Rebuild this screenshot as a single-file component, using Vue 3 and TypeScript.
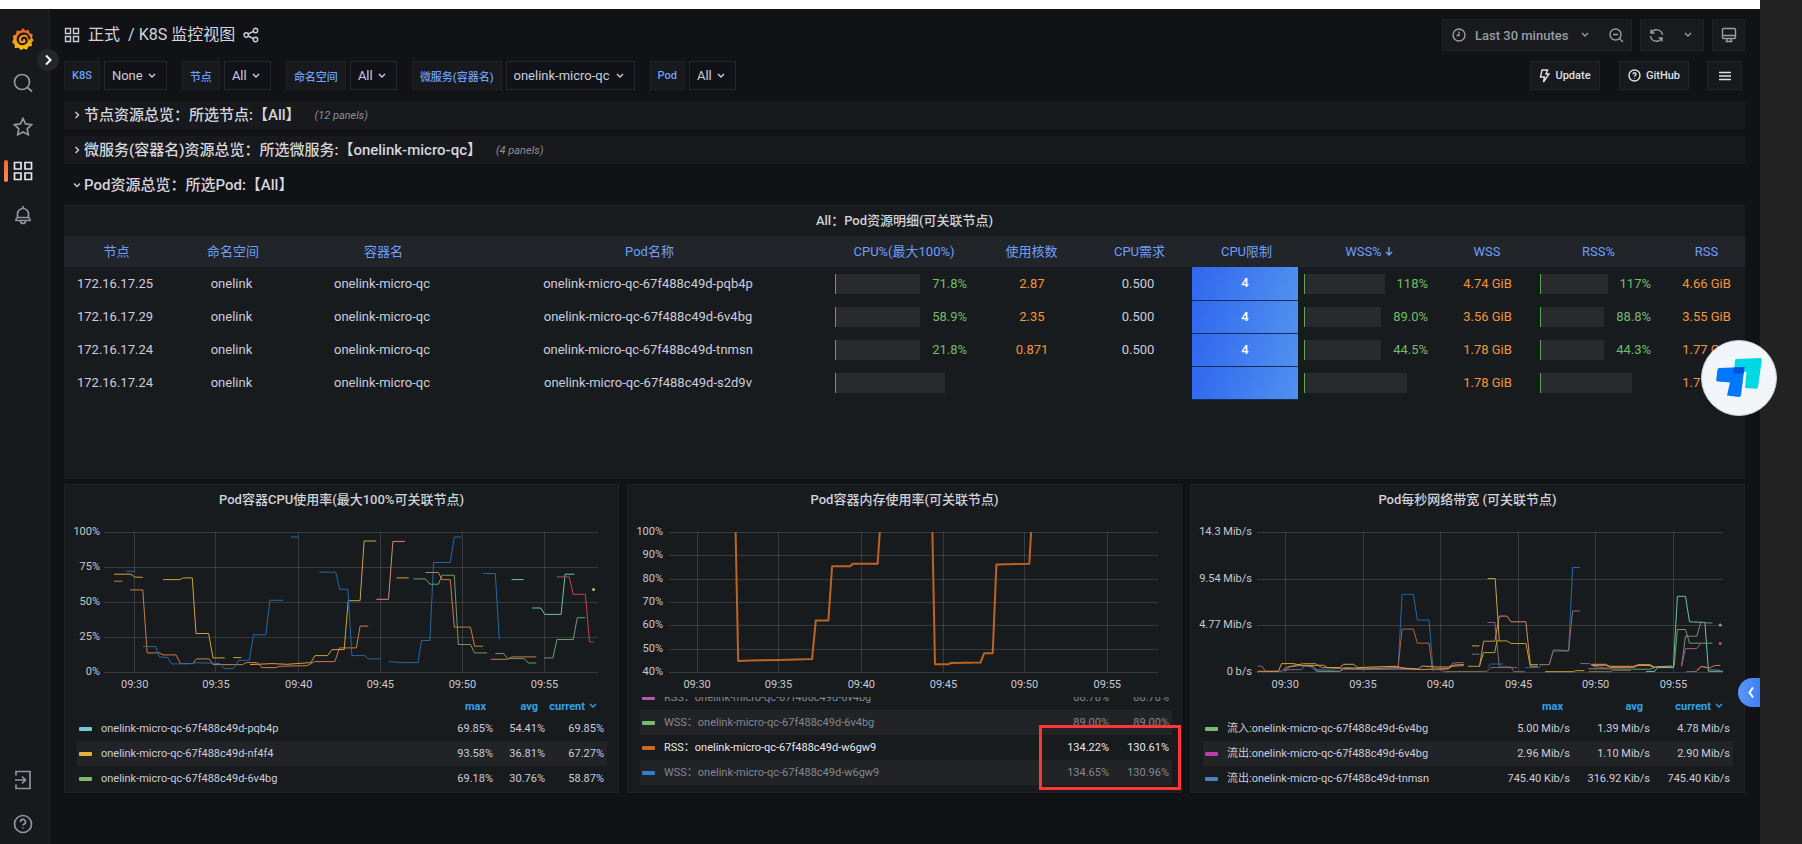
<script setup lang="ts">
interface Variable { id: string; label: string; value: string }
interface Pod {
  node: string
  name: string
  cpu: string
  cores: string
  request: string
  limit: string
  wssPct: string
  wss: string
  rssPct: string
  rss: string
}
interface Line { color: string; points: string }
interface Axis { at: number; label: string }
interface LegendRow { color: string; name: string; values: string[]; tone?: string }
interface Chart {
  title: string
  kind: string
  // plot rectangle inside the drawing
  left: number
  right: number
  // horizontal range of the sampled coordinates
  from: number
  to: number
  labelX: number
  stroke: number
  xTicks: Axis[]
  yTicks: Axis[]
  lines: Line[]
  dots: { color: string; x: number; y: number }[]
  headers: string[]
  legend: LegendRow[]
}

const variables: Variable[] = [
  { id: 'var-k8s', label: 'K8S', value: 'None' },
  { id: 'var-node', label: '节点', value: 'All' },
  { id: 'var-ns', label: '命名空间', value: 'All' },
  { id: 'var-container', label: '微服务(容器名)', value: 'onelink-micro-qc' },
  { id: 'var-pod', label: 'Pod', value: 'All' },
]

const rows = [
  { title: '节点资源总览：所选节点:【All】', count: '(12 panels)', open: false },
  { title: '微服务(容器名)资源总览：所选微服务:【onelink-micro-qc】', count: '(4 panels)', open: false },
  { title: 'Pod资源总览：所选Pod:【All】', count: '', open: true },
]

const pods: Pod[] = [
  { node: '172.16.17.25', name: 'onelink-micro-qc-67f488c49d-pqb4p', cpu: '71.8%', cores: '2.87', request: '0.500', limit: '4', wssPct: '118%', wss: '4.74 GiB', rssPct: '117%', rss: '4.66 GiB' },
  { node: '172.16.17.29', name: 'onelink-micro-qc-67f488c49d-6v4bg', cpu: '58.9%', cores: '2.35', request: '0.500', limit: '4', wssPct: '89.0%', wss: '3.56 GiB', rssPct: '88.8%', rss: '3.55 GiB' },
  { node: '172.16.17.24', name: 'onelink-micro-qc-67f488c49d-tnmsn', cpu: '21.8%', cores: '0.871', request: '0.500', limit: '4', wssPct: '44.5%', wss: '1.78 GiB', rssPct: '44.3%', rss: '1.77 GiB' },
  { node: '172.16.17.24', name: 'onelink-micro-qc-67f488c49d-s2d9v', cpu: '', cores: '', request: '', limit: '', wssPct: '', wss: '1.78 GiB', rssPct: '', rss: '1.77 GiB' },
]

const times = ['09:30', '09:35', '09:40', '09:45', '09:50', '09:55']
const ticks = (positions: number[], labels: string[]): Axis[] =>
  positions.map((at, i) => ({ at, label: labels[i] }))

const blue = '#2368a6'
const orange = '#cf7a45'
const yellow = '#c9a43a'
const green = '#6f9a68'
const teal = '#6cc0a4'
const purple = '#7d6690'

const TOP = 16
const HEIGHT = 140
const Y_MIN = 187
const Y_RANGE = 418

const charts: Chart[] = [
  {
    title: 'Pod容器CPU使用率(最大100%可关联节点)',
    kind: 'cpu',
    left: 39, right: 533, from: 145, to: 1482, labelX: 35, stroke: 1,
    xTicks: ticks([228, 448, 672, 893, 1115, 1337], times),
    yTicks: ticks([187, 291, 396, 500, 605], ['100%', '75%', '50%', '25%', '0%']),
    lines: [
      { color: yellow, points: '172,313 218,313 228,322 250,322' },
      { color: orange, points: '172,334 195,334' },
      { color: blue, points: '205,304 230,304' },
      { color: orange, points: '216,360 250,360 262,548 295,548 305,554 340,554 352,580 385,580 395,566 430,566 440,583 520,583 530,577 560,577 572,592 610,592 620,588 695,586 715,574 770,574 782,533 828,533 838,468 860,468' },
      { color: blue, points: '250,529 285,529 295,560 318,562 328,581 385,580 395,577 460,580 470,595 495,595 510,570 538,570 550,494 583,494 594,391 630,391' },
      { color: yellow, points: '305,329 350,329 360,324 384,324 394,490 428,490 440,563 472,563' },
      { color: yellow, points: '495,562 517,562' },
      { color: yellow, points: '540,583 600,580 640,582 705,577 716,556 750,556 762,538 795,538 806,392 838,392 849,214 882,214' },
      { color: blue, points: '650,202 672,202' },
      { color: blue, points: '728,307 772,307 783,358 805,358 816,556 850,556 860,566 893,566' },
      { color: '#d58a66', points: '882,388 915,388 927,215 960,215' },
      { color: yellow, points: '937,324 970,324' },
      { color: blue, points: '915,574 950,577 995,577 1004,511 1027,511 1037,278 1082,278 1093,202 1112,202' },
      { color: green, points: '982,327 1015,327 1027,343 1050,343 1060,316 1093,316 1104,523 1137,523 1148,548 1182,548' },
      { color: orange, points: '1015,308 1050,308 1060,329 1082,329 1093,471 1137,471 1148,528 1171,528' },
      { color: blue, points: '1171,311 1204,311 1215,508' },
      { color: teal, points: '1248,329 1281,329' },
      { color: teal, points: '1304,414 1327,414 1338,433 1382,433 1393,313 1418,313' },
      { color: '#c24452', points: '1370,321 1404,321 1415,373 1448,373 1459,515 1470,515' },
      { color: orange, points: '1192,567 1237,567 1248,560 1315,560' },
      { color: green, points: '1204,550 1227,550 1237,565 1282,565 1293,578 1315,578' },
      { color: green, points: '1337,563 1360,563 1371,508 1415,508 1426,443 1448,443' },
    ],
    dots: [{ color: '#a9c47a', x: 1470, y: 359 }],
    headers: ['max', 'avg', 'current'],
    legend: [
      { color: '#73c9d0', name: 'onelink-micro-qc-67f488c49d-pqb4p', values: ['69.85%', '54.41%', '69.85%'] },
      { color: '#e3b53a', name: 'onelink-micro-qc-67f488c49d-nf4f4', values: ['93.58%', '36.81%', '67.27%'] },
      { color: '#7ab96e', name: 'onelink-micro-qc-67f488c49d-6v4bg', values: ['69.18%', '30.76%', '58.87%'] },
    ],
  },
  {
    title: 'Pod容器内存使用率(可关联节点)',
    kind: 'memory',
    left: 41, right: 530, from: 160, to: 1482, labelX: 35, stroke: 2,
    xTicks: ticks([236, 456, 680, 902, 1121, 1345], times),
    yTicks: ticks([187, 257, 327, 396, 465, 535, 605], ['100%', '90%', '80%', '70%', '60%', '50%', '40%']),
    lines: [
      { color: '#bd6420', points: '340,187 347,572 380,571 460,569 547,566 557,451 591,451 601,289 650,289 657,282 724,282 730,187' },
      { color: '#bd6420', points: '872,187 879,582 915,582 922,578 1002,577 1012,549 1035,549 1045,284 1134,282 1139,187' },
    ],
    dots: [],
    headers: [],
    legend: [
      { color: '#b05bb0', name: 'RSS：onelink-micro-qc-67f488c49d-6v4bg', values: ['88.78%', '88.78%'], tone: 'dim' },
      { color: '#7ab96e', name: 'WSS：onelink-micro-qc-67f488c49d-6v4bg', values: ['89.00%', '89.00%'], tone: 'dim' },
      { color: '#cc6a22', name: 'RSS：onelink-micro-qc-67f488c49d-w6gw9', values: ['134.22%', '130.61%'], tone: 'strong' },
      { color: '#2f7fd0', name: 'WSS：onelink-micro-qc-67f488c49d-w6gw9', values: ['134.65%', '130.96%'], tone: 'dim' },
    ],
  },
  {
    title: 'Pod每秒网络带宽 (可关联节点)',
    kind: 'network',
    left: 66, right: 532, from: 215, to: 1371, labelX: 61, stroke: 1,
    xTicks: ticks([285, 478, 670, 864, 1055, 1248], times),
    yTicks: ticks([187, 327, 465, 605], ['14.3 Mib/s', '9.54 Mib/s', '4.77 Mib/s', '0 b/s']),
    lines: [
      { color: purple, points: '216,587 228,588 236,603 275,603 287,598 325,598 335,585 350,590 362,603 420,603 430,597 560,597 630,597 690,597 700,578 728,577' },
      { color: green, points: '285,603 295,590 320,586 355,588 365,603 420,603 432,592 480,594 520,594' },
      { color: blue, points: '360,597 400,600 410,594 565,595 575,373 603,373 613,450 642,450 652,603' },
      { color: '#b8602c', points: '565,590 575,477 603,477 613,519 642,519 650,598' },
      { color: orange, points: '280,598 290,590 330,580 360,580 375,592 480,596 560,592 620,598 690,594 700,588 728,586' },
      { color: '#d9a23c', points: '216,603 268,603 276,580 305,580 325,585 380,585 390,592 420,592 430,582 455,582 465,592 500,590 560,588 575,593 615,596 625,587 660,590 690,590 705,584 728,583' },
      { color: '#8a6a50', points: '650,598 672,598 680,604 785,603 795,592 860,592' },
      { color: yellow, points: '748,527 767,527' },
      { color: purple, points: '748,552 767,552' },
      { color: purple, points: '787,457 805,457 816,590 845,590 852,604 880,604' },
      { color: yellow, points: '787,326 806,326 816,512' },
      { color: '#d58a66', points: '767,588 777,513 805,513 816,438 835,438 845,455 882,455 893,583 912,583' },
      { color: '#b5a31e', points: '738,588 767,588 777,547 805,547 810,512 835,512 845,520 882,520 893,588 912,588' },
      { color: blue, points: '787,590 795,581 825,581' },
      { color: blue, points: '880,592 915,592 920,583 940,583 950,543 988,543 998,293 1016,293' },
      { color: '#9a6a5e', points: '915,583 940,583 950,539 988,541 998,423 1016,423' },
      { color: yellow, points: '930,604 1000,604 1005,601 1027,601' },
      { color: purple, points: '1017,580 1040,580 1050,588 1085,594' },
      { color: '#9a6a5e', points: '1037,604 1090,604 1100,600 1142,600' },
      { color: green, points: '1037,595 1190,597 1204,590 1248,590' },
      { color: '#dd9550', points: '1045,582 1080,582 1090,588 1150,588 1160,583 1190,583 1200,590 1245,587' },
      { color: '#dd9550', points: '1045,585 1080,585 1090,591 1150,591 1160,586 1190,586 1200,593' },
      { color: teal, points: '1180,604 1202,603 1208,592 1248,592 1258,379 1278,379 1288,455 1326,457 1335,603 1371,603' },
      { color: green, points: '1250,588 1258,478 1278,478 1288,519 1345,519' },
      { color: '#7f8b78', points: '1268,588 1278,498 1306,498 1316,457 1345,459' },
      { color: '#a8559a', points: '1268,588 1278,535 1306,535 1316,519' },
      { color: purple, points: '1280,604 1306,603 1316,589 1330,590 1340,598 1364,600' },
      { color: orange, points: '1306,600 1318,588 1335,594 1350,586 1364,585' },
    ],
    dots: [{ color: '#8f9a90', x: 1364, y: 465 }, { color: '#a8559a', x: 1364, y: 520 }],
    headers: ['max', 'avg', 'current'],
    legend: [
      { color: '#7ab96e', name: '流入:onelink-micro-qc-67f488c49d-6v4bg', values: ['5.00 Mib/s', '1.39 Mib/s', '4.78 Mib/s'] },
      { color: '#b93fa8', name: '流出:onelink-micro-qc-67f488c49d-6v4bg', values: ['2.96 Mib/s', '1.10 Mib/s', '2.90 Mib/s'] },
      { color: '#4a80bd', name: '流出:onelink-micro-qc-67f488c49d-tnmsn', values: ['745.40 Kib/s', '316.92 Kib/s', '745.40 Kib/s'] },
    ],
  },
]

const px = (c: Chart, x: number): number =>
  c.left + ((x - c.from) * (c.right - c.left)) / (c.to - c.from)
const py = (y: number): number => TOP + ((y - Y_MIN) * HEIGHT) / Y_RANGE
const project = (c: Chart, points: string): string =>
  points
    .split(' ')
    .map((pair) => {
      const [x, y] = pair.split(',').map(Number)
      return `${px(c, x).toFixed(1)},${py(y).toFixed(1)}`
    })
    .join(' ')
const crisp = (v: number): number => Math.round(v) + 0.5
</script>

<template>
  <div class="screen">
    <div class="window">
      <div class="strip"></div>
      <div class="shell">
        <nav class="sidebar">
          <a href="#" class="side" aria-label="Home">
            <svg width="22" height="24" viewBox="0 0 22 24">
              <defs>
                <linearGradient id="logo" x1="0" y1="0" x2="0" y2="1">
                  <stop offset="0" stop-color="#ee5a2a" />
                  <stop offset="1" stop-color="#fbca0a" />
                </linearGradient>
              </defs>
              <path fill="url(#logo)" d="M11 1l2.200 2.600 3.600-.5.7 3.100 3.200 1.100-.7 3.300 1.600 2.600-2 2.200.3 3.700-3.500.4-1.600 3.200-3-1.200L8.900 23l-2.300-2.200-3.700.2-.3-3.600L0 15.200l1.400-2.900L.8 8.700l3.100-1.200L4.800 3.600l3.700.5z" />
              <path fill="none" stroke="#17191c" stroke-width="2.200" stroke-linecap="round" d="M17.500 11.500c-.5-3.500-3.500-5.300-6.400-4.900-3.400.4-5.800 3.200-5.400 6.200.4 3 2.900 4.700 5.300 4.400 2.300-.3 3.900-2 3.700-3.900-.3-1.700-1.700-2.600-3-2.400-1.200.2-1.800 1.200-1.600 2" />
            </svg>
          </a>
          <a href="#" class="side" aria-label="Search">
            <svg width="20" height="20" viewBox="0 0 20 20" class="line"><circle cx="9" cy="9" r="7.500" /><path d="M14.500 14.500L19 18.500" /></svg>
          </a>
          <a href="#" class="side" aria-label="Starred">
            <svg width="20" height="20" viewBox="0 0 20 20" class="line"><path d="M10 1.500l2.600 5.400 5.900.8-4.300 4.100 1.100 5.900L10 14.900l-5.300 2.800 1.100-5.900L1.500 7.700l5.900-.8z" /></svg>
          </a>
          <a href="#" class="side current" aria-label="Dashboards">
            <svg width="20" height="20" viewBox="0 0 20 20" class="line"><path d="M1.500 1.500h6.500v6.500H1.500zM12 1.500h6.500v6.500H12zM1.500 12h6.500v6.500H1.500zM12 12h6.500v6.500H12z" /></svg>
          </a>
          <a href="#" class="side" aria-label="Alerting">
            <svg width="20" height="20" viewBox="0 0 20 20" class="line"><path d="M10 1v2M4.500 12.500V9a5.500 5.500 0 0 1 11 0v3.500c1.500.5 1.500 2.500 1.500 3H3c0-.5 0-2.500 1.500-3zM4.500 12.500h11M7.500 16a2.500 2.500 0 0 0 5 0" /></svg>
          </a>
          <span class="spring"></span>
          <a href="#" class="side" aria-label="Sign in">
            <svg width="18" height="20" viewBox="0 0 18 20" class="line"><path d="M2 5.500V1.500h14v17H2v-4M1 10h10M8 6.500l3.500 3.500L8 13.500" /></svg>
          </a>
          <a href="#" class="side help" aria-label="Help">
            <svg width="20" height="20" viewBox="0 0 20 20" class="line"><circle cx="10" cy="10" r="8.500" /><path d="M7.500 8a2.500 2.500 0 1 1 3.300 2.300c-.6.200-.8.500-.8 1.200M10 13.500v1" /></svg>
          </a>
          <button type="button" class="expand" aria-label="Expand menu">
            <svg width="8" height="12" viewBox="0 0 8 12"><path d="M2 1.500L6.500 6 2 10.500" /></svg>
          </button>
        </nav>

        <main class="main">
          <header class="toolbar">
            <svg width="16" height="16" viewBox="0 0 16 16" class="glyph"><path d="M1.500 1.500h5v5h-5zM9.500 1.500h5v5h-5zM1.500 9.500h5v5h-5zM9.500 9.500h5v5h-5z" /></svg>
            <h1 class="crumbs"><a href="#">正式</a><span class="slash">/</span><a href="#">K8S 监控视图</a></h1>
            <button type="button" class="plain" aria-label="Share">
              <svg width="16" height="16" viewBox="0 0 16 16" class="glyph"><circle cx="3.200" cy="8" r="2.200" /><circle cx="12.500" cy="3.500" r="2.200" /><circle cx="12.500" cy="12.500" r="2.200" /><path d="M5.200 7l5.300-2.600M5.200 9l5.300 2.600" /></svg>
            </button>
            <span class="spring"></span>
            <div class="group">
              <button type="button" class="tool time">
                <svg width="14" height="14" viewBox="0 0 14 14" class="glyph"><circle cx="7" cy="7" r="6" /><path d="M7 3.500V7.500H4.500" /></svg>
                Last 30 minutes
                <svg width="8" height="6" viewBox="0 0 8 6" class="glyph caret"><path d="M1 1l3 3 3-3" /></svg>
              </button>
              <button type="button" class="tool zoom" aria-label="Zoom out">
                <svg width="15" height="15" viewBox="0 0 15 15" class="glyph"><circle cx="6.500" cy="6.500" r="5.500" /><path d="M4 6.500h5M10.500 10.500l3.500 3.500" /></svg>
              </button>
            </div>
            <div class="group">
              <button type="button" class="tool refresh" aria-label="Refresh">
                <svg width="15" height="15" viewBox="0 0 15 15" class="glyph"><path d="M2 1.500V5h3.500M2.200 5A6 6 0 0 1 13.500 7M13 13.500V10H9.500M12.800 10A6 6 0 0 1 1.500 8" /></svg>
              </button>
              <button type="button" class="tool interval" aria-label="Refresh interval">
                <svg width="8" height="6" viewBox="0 0 8 6" class="glyph"><path d="M1 1l3 3 3-3" /></svg>
              </button>
            </div>
            <div class="group">
              <button type="button" class="tool view" aria-label="Cycle view mode">
                <svg width="16" height="16" viewBox="0 0 16 16" class="glyph"><path d="M2.500 1.500h11a1 1 0 0 1 1 1v8a1 1 0 0 1-1 1h-11a1 1 0 0 1-1-1v-8a1 1 0 0 1 1-1zM1.500 8.500h13M6 11.500v2.500M10 11.500v2.500M4.500 14.500h7" /></svg>
              </button>
            </div>
          </header>

          <div class="submenu">
            <div v-for="v in variables" :key="v.id" class="variable">
              <label :for="v.id">{{ v.label }}</label>
              <span class="picker">
                <select :id="v.id"><option>{{ v.value }}</option></select>
                <svg width="8" height="6" viewBox="0 0 8 6" class="glyph"><path d="M1 1l3 3 3-3" /></svg>
              </span>
            </div>
            <span class="spring"></span>
            <a href="#" class="link update">
              <svg width="11" height="14" viewBox="0 0 11 14" class="glyph"><path d="M3 1h5.500L7 5h3L4.500 13 5.500 8H1.500z" /></svg>Update
            </a>
            <a href="#" class="link github">
              <svg width="13" height="13" viewBox="0 0 13 13" class="glyph"><circle cx="6.500" cy="6.500" r="5.500" /><path d="M5 5.200a1.500 1.500 0 1 1 2 1.400c-.4.200-.5.400-.5.900M6.500 8.800v.8" /></svg>GitHub
            </a>
            <button type="button" class="link menu" aria-label="Menu">
              <svg width="14" height="10" viewBox="0 0 14 10" class="glyph"><path d="M1 1.500h12M1 5h12M1 8.500h12" /></svg>
            </button>
          </div>

          <div class="rows">
            <button v-for="r in rows" :key="r.title" type="button" class="row" :class="{ open: r.open }" :aria-expanded="r.open">
              <svg width="8" height="8" viewBox="0 0 8 8" class="glyph"><path :d="r.open ? 'M1 2.500l3 3 3-3' : 'M2.500 1l3 3-3 3'" /></svg>
              <span class="row-title">{{ r.title }}</span>
              <span v-if="r.count" class="row-count">{{ r.count }}</span>
            </button>
          </div>

          <div class="panels">
            <section class="panel detail">
              <h2 class="panel-title">All：Pod资源明细(可关联节点)</h2>
              <table class="pods">
                <colgroup>
                  <col class="w-node" /><col class="w-ns" /><col class="w-container" /><col />
                  <col class="w-cpu" /><col class="w-mid" /><col class="w-mid" /><col class="w-limit" />
                  <col class="w-wss" /><col class="w-size" /><col class="w-rss" /><col class="w-last" />
                </colgroup>
                <thead>
                  <tr>
                    <th>节点</th><th>命名空间</th><th>容器名</th><th>Pod名称</th><th>CPU%(最大100%)</th><th>使用核数</th>
                    <th>CPU需求</th><th>CPU限制</th>
                    <th>WSS% <svg width="8" height="9" viewBox="0 0 8 9" class="glyph"><path d="M4 0v8M1 5l3 3 3-3" /></svg></th>
                    <th>WSS</th><th>RSS%</th><th class="last">RSS</th>
                  </tr>
                </thead>
                <tbody>
                  <tr v-for="p in pods" :key="p.name">
                    <td>{{ p.node }}</td>
                    <td>onelink</td>
                    <td>onelink-micro-qc</td>
                    <td>{{ p.name }}</td>
                    <td class="gauge"><div class="meter"><i></i><span v-if="p.cpu">{{ p.cpu }}</span></div></td>
                    <td class="amber">{{ p.cores }}</td>
                    <td>{{ p.request }}</td>
                    <td class="limit">{{ p.limit }}</td>
                    <td class="gauge"><div class="meter"><i></i><span v-if="p.wssPct">{{ p.wssPct }}</span></div></td>
                    <td class="amber">{{ p.wss }}</td>
                    <td class="gauge"><div class="meter"><i></i><span v-if="p.rssPct">{{ p.rssPct }}</span></div></td>
                    <td class="amber last">{{ p.rss }}</td>
                  </tr>
                </tbody>
              </table>
            </section>

            <div class="charts">
              <section v-for="c in charts" :key="c.kind" class="panel chart" :class="c.kind">
                <h2 class="panel-title">{{ c.title }}</h2>
                <svg class="plot" viewBox="0 0 553 181" role="img" :aria-label="c.title">
                  <g class="grid">
                    <line v-for="t in c.yTicks" :key="t.label" :x1="c.left" :x2="c.right" :y1="crisp(py(t.at))" :y2="crisp(py(t.at))" />
                    <line v-for="t in c.xTicks" :key="t.label" :x1="crisp(px(c, t.at) - 0.5)" :x2="crisp(px(c, t.at) - 0.5)" :y1="TOP" :y2="TOP + HEIGHT" />
                  </g>
                  <g class="ylabels">
                    <text v-for="t in c.yTicks" :key="t.label" :x="c.labelX" :y="py(t.at) + 3">{{ t.label }}</text>
                  </g>
                  <g class="xlabels">
                    <text v-for="t in c.xTicks" :key="t.label" :x="px(c, t.at)" :y="TOP + HEIGHT + 16">{{ t.label }}</text>
                  </g>
                  <polyline v-for="(l, i) in c.lines" :key="i" fill="none" :stroke="l.color" :stroke-width="c.stroke" stroke-linejoin="round" :points="project(c, l.points)" />
                  <circle v-for="d in c.dots" :key="d.y" :cx="px(c, d.x)" :cy="py(d.y)" r="1.500" :fill="d.color" />
                </svg>
                <div class="legend">
                  <table>
                    <colgroup>
                      <col />
                      <col v-for="(v, i) in c.legend[0].values" :key="i" :class="i === c.legend[0].values.length - 1 ? 'final' : 'figure'" />
                    </colgroup>
                    <thead v-if="c.headers.length">
                      <tr>
                        <th></th>
                        <th v-for="h in c.headers" :key="h">
                          {{ h }}<svg v-if="h === 'current'" width="8" height="6" viewBox="0 0 8 6" class="glyph"><path d="M1 1l3 3 3-3" /></svg>
                        </th>
                      </tr>
                    </thead>
                    <tbody>
                      <tr v-for="r in c.legend" :key="r.name" :class="r.tone">
                        <td><i class="swatch" :style="{ background: r.color }"></i>{{ r.name }}</td>
                        <td v-for="(v, i) in r.values" :key="i">{{ v }}</td>
                      </tr>
                    </tbody>
                  </table>
                </div>
                <div v-if="c.kind === 'memory'" class="marker"></div>
              </section>
            </div>
          </div>
        </main>
      </div>

      <button type="button" class="assistant" aria-label="Assistant">
        <svg width="46" height="40" viewBox="0 0 46 40">
          <path fill="#00d8e4" d="M19 2.500Q19 1 20.500 1L44 0q2 0 1.800 2L42 29q-.2 2-2 1.800L29 30l1.500-16L18 13.500z" />
          <path fill="#0077ff" d="M1.500 11.500Q1.700 10 3.200 10L28.500 9 25 37q-.3 2-2 2L11 37.500 14 24.500 2 23.500Q0 23.300.2 22z" />
          <path fill="#0052dc" d="M18 9.500l10.500-.5-.8 6.500H17z" />
        </svg>
      </button>
      <button type="button" class="drawer" aria-label="Open drawer">
        <svg width="8" height="13" viewBox="0 0 8 13"><path d="M6 1.500L2.500 6.500 6 11.500" /></svg>
      </button>
    </div>
    <div class="gutter"></div>
  </div>
</template>

<style>
body {
  margin: 0;
  background: #111217;
}
</style>

<style scoped>
.screen {
  display: flex;
  min-height: 100vh;
  font-family: Roboto, 'Noto Sans CJK SC', sans-serif;
  font-size: 13px;
  color: #ccccdc;
}
.screen *,
.screen {
  box-sizing: border-box;
}
.window {
  position: relative;
  flex: 1;
  min-width: 0;
  display: flex;
  flex-direction: column;
  background: #111216;
}
.strip {
  height: 9px;
  background: #fff;
}
.gutter {
  width: 42px;
  background: #222;
}
.shell {
  flex: 1;
  display: flex;
}
.spring {
  flex: 1;
}
button,
select {
  font: inherit;
  color: inherit;
  border: 0;
  background: none;
  padding: 0;
  margin: 0;
}
a {
  color: inherit;
  text-decoration: none;
}
svg {
  flex: none;
}
.glyph {
  fill: none;
  stroke: currentColor;
  stroke-width: 1.4;
}

.sidebar {
  position: relative;
  width: 50px;
  padding-top: 8px;
  display: flex;
  flex-direction: column;
  background: #17191c;
  border-right: 1px solid #1d1f22;
}
.side {
  position: relative;
  height: 44px;
  padding-right: 3px;
  display: flex;
  align-items: center;
  justify-content: center;
  color: #93959b;
}
.side.help {
  height: 40px;
  margin-top: 2px;
}
.line {
  fill: none;
  stroke: currentColor;
  stroke-width: 1.7;
}
.side.current {
  color: #e6e6ee;
}
.side.current::before {
  content: '';
  position: absolute;
  left: 4px;
  top: 11px;
  width: 4px;
  height: 22px;
  border-radius: 2px;
  background: linear-gradient(#f2643a, #ff9050);
}
.expand {
  position: absolute;
  left: 37px;
  top: 40px;
  width: 22px;
  height: 22px;
  border-radius: 50%;
  background: #24262a;
  display: flex;
  align-items: center;
  justify-content: center;
}
.expand svg,
.drawer svg {
  fill: none;
  stroke: #fff;
  stroke-width: 2;
}

.main {
  flex: 1;
  min-width: 0;
  padding: 10px 15px 0 14px;
}
.toolbar {
  height: 32px;
  display: flex;
  align-items: center;
  gap: 8px;
}
.crumbs {
  margin: 0;
  font-size: 16px;
  font-weight: 400;
  line-height: 24px;
  color: #d5d6dc;
}
.slash {
  padding: 0 4px 0 8px;
}
.plain {
  display: flex;
}
.group {
  height: 32px;
  display: flex;
  background: #181a1d;
  border: 1px solid #1e2023;
  color: #9a9ba3;
}
.tool {
  display: flex;
  align-items: center;
  justify-content: center;
}
.time {
  justify-content: flex-start;
  gap: 9px;
  width: 158px;
  padding-left: 9px;
  font-weight: 500;
  white-space: nowrap;
}
.caret {
  margin-left: 4px;
}
.zoom {
  width: 30px;
}
.refresh,
.interval,
.view {
  width: 31px;
}

.submenu {
  height: 29px;
  margin: 10px 0 11px;
  display: flex;
  align-items: stretch;
}
.variable {
  display: flex;
  gap: 4px;
  margin-right: 15px;
}
.variable label {
  display: flex;
  align-items: center;
  padding: 0 7px;
  font-size: 11px;
  font-weight: 500;
  color: #6e9fff;
  background: #17191d;
  border: 1px solid #1e2024;
}
.picker {
  display: flex;
  align-items: center;
  gap: 5px;
  padding: 0 10px 0 7px;
  border: 1px solid #26282c;
  background: #111217;
}
.picker select {
  appearance: none;
  height: 27px;
  outline: none;
}
.link {
  display: flex;
  align-items: center;
  justify-content: center;
  gap: 5px;
  font-size: 11px;
  font-weight: 500;
  color: #dfe0e6;
  background: #17191c;
  border: 1px solid #212326;
}
.update {
  width: 70px;
  margin-right: 19px;
}
.github {
  width: 70px;
  margin-right: 18px;
}
.menu {
  width: 35px;
  margin-right: 3px;
}

.rows {
  display: flex;
  flex-direction: column;
  gap: 7px;
  padding-bottom: 6px;
}
.row {
  height: 28px;
  display: flex;
  align-items: center;
  padding-left: 9px;
  text-align: left;
  background: #18191d;
}
.row.open {
  background: none;
}
.row-title {
  margin-left: 3px;
  font-size: 15px;
  font-weight: 500;
  line-height: 24px;
  color: #d5d6dc;
}
.row-count {
  margin-left: 14px;
  font-size: 11px;
  font-style: italic;
  color: #8e8f97;
}

.panels {
  display: flex;
  flex-direction: column;
  gap: 5px;
}
.panel {
  position: relative;
  display: flex;
  flex-direction: column;
  background: #181b1e;
  border: 1px solid #1f2124;
  min-width: 0;
}
.panel-title {
  margin: 0;
  height: 31px;
  text-align: center;
  font-size: 13px;
  font-weight: 500;
  line-height: 30px;
  color: #d0d1d9;
}
.detail {
  height: 274px;
  border-width: 1px 0;
}
.detail .panel-title {
  height: 30px;
}
.pods {
  width: 100%;
  table-layout: fixed;
  border-collapse: collapse;
}
.w-node { width: 102px; }
.w-ns { width: 131px; }
.w-container { width: 170px; }
.w-cpu { width: 147px; }
.w-mid { width: 108px; }
.w-limit { width: 106px; }
.w-wss { width: 139px; }
.w-size { width: 97px; }
.w-rss { width: 126px; }
.w-last { width: 85px; }
.pods th,
.pods td {
  padding: 0;
  text-align: center;
  white-space: nowrap;
  line-height: 20px;
}
.pods th {
  height: 31px;
  padding-left: 3px;
  font-weight: 400;
  color: #6e9fff;
  background: #212428;
}
.pods td {
  height: 33px;
}
.pods .amber {
  padding-left: 4px;
  color: #f2953c;
}
.pods .last {
  padding-left: 8px;
}
.pods .limit {
  color: #fff;
  font-weight: 500;
  background: linear-gradient(110deg, #2f66ee, #5191f0);
  border-bottom: 1px solid #182c58;
}
.pods .gauge {
  padding: 0 9px 0 6px;
}
.meter {
  display: flex;
  align-items: center;
  gap: 12px;
  height: 20px;
  color: #6fbc68;
}
.meter i {
  flex: 1;
  height: 20px;
  background: #292a2e;
  border-left: 1px solid #5fa45a;
}
.meter i:only-child {
  flex: none;
  width: 83%;
}

.charts {
  display: grid;
  grid-template-columns: repeat(3, minmax(0, 1fr));
  gap: 8px;
}
.plot {
  display: block;
  width: 100%;
}
.grid line {
  stroke: #fff;
  stroke-opacity: 0.14;
}
.plot text {
  font-size: 11px;
  fill: #c7c8d0;
}
.ylabels {
  text-anchor: end;
}
.xlabels {
  text-anchor: middle;
}
.legend {
  height: 95px;
  padding: 0 11px 1px 12px;
  display: flex;
  flex-direction: column;
  justify-content: flex-end;
  overflow: hidden;
  font-size: 11px;
}
.memory .legend {
  padding: 0 9px 7px 12px;
}
.legend table {
  width: 100%;
  table-layout: fixed;
  border-collapse: collapse;
}
.figure { width: 52px; }
.final { width: 59px; }
.memory .figure,
.memory .final { width: 60px; }
.network .figure,
.network .final { width: 80px; }
.legend th {
  height: 18px;
  padding: 0 10px 0 0;
  text-align: right;
  font-weight: 700;
  line-height: 18px;
  white-space: nowrap;
  color: #33a2e5;
}
.legend th svg {
  margin-left: 4px;
  vertical-align: 1px;
}
.legend td {
  height: 25px;
  padding: 0 3px 0 0;
  text-align: right;
  line-height: 20px;
  white-space: nowrap;
}
.legend td:first-child {
  padding-left: 2px;
  text-align: left;
}
.legend tbody tr:nth-child(even) {
  background: #212327;
}
.legend .dim {
  color: #85868e;
}
.legend .strong {
  color: #e6e6ec;
}
.swatch {
  display: inline-block;
  width: 13px;
  height: 4px;
  margin-right: 9px;
  border-radius: 1px;
  vertical-align: 1px;
}
.marker {
  position: absolute;
  right: 0;
  bottom: 2px;
  width: 142px;
  height: 65px;
  border: 3px solid #fb3838;
}

.assistant {
  position: absolute;
  right: -17px;
  top: 340px;
  z-index: 2;
  width: 76px;
  height: 76px;
  border-radius: 50%;
  background: #f2f6fa;
  border: 1px solid #c9ccd0;
  display: flex;
  align-items: center;
  justify-content: center;
}
.drawer {
  position: absolute;
  right: 0;
  top: 678px;
  width: 22px;
  height: 29px;
  padding-left: 4px;
  border-radius: 15px 0 0 15px;
  background: linear-gradient(90deg, #5a96f8, #3f7ff5);
  display: flex;
  align-items: center;
  justify-content: center;
}
</style>
